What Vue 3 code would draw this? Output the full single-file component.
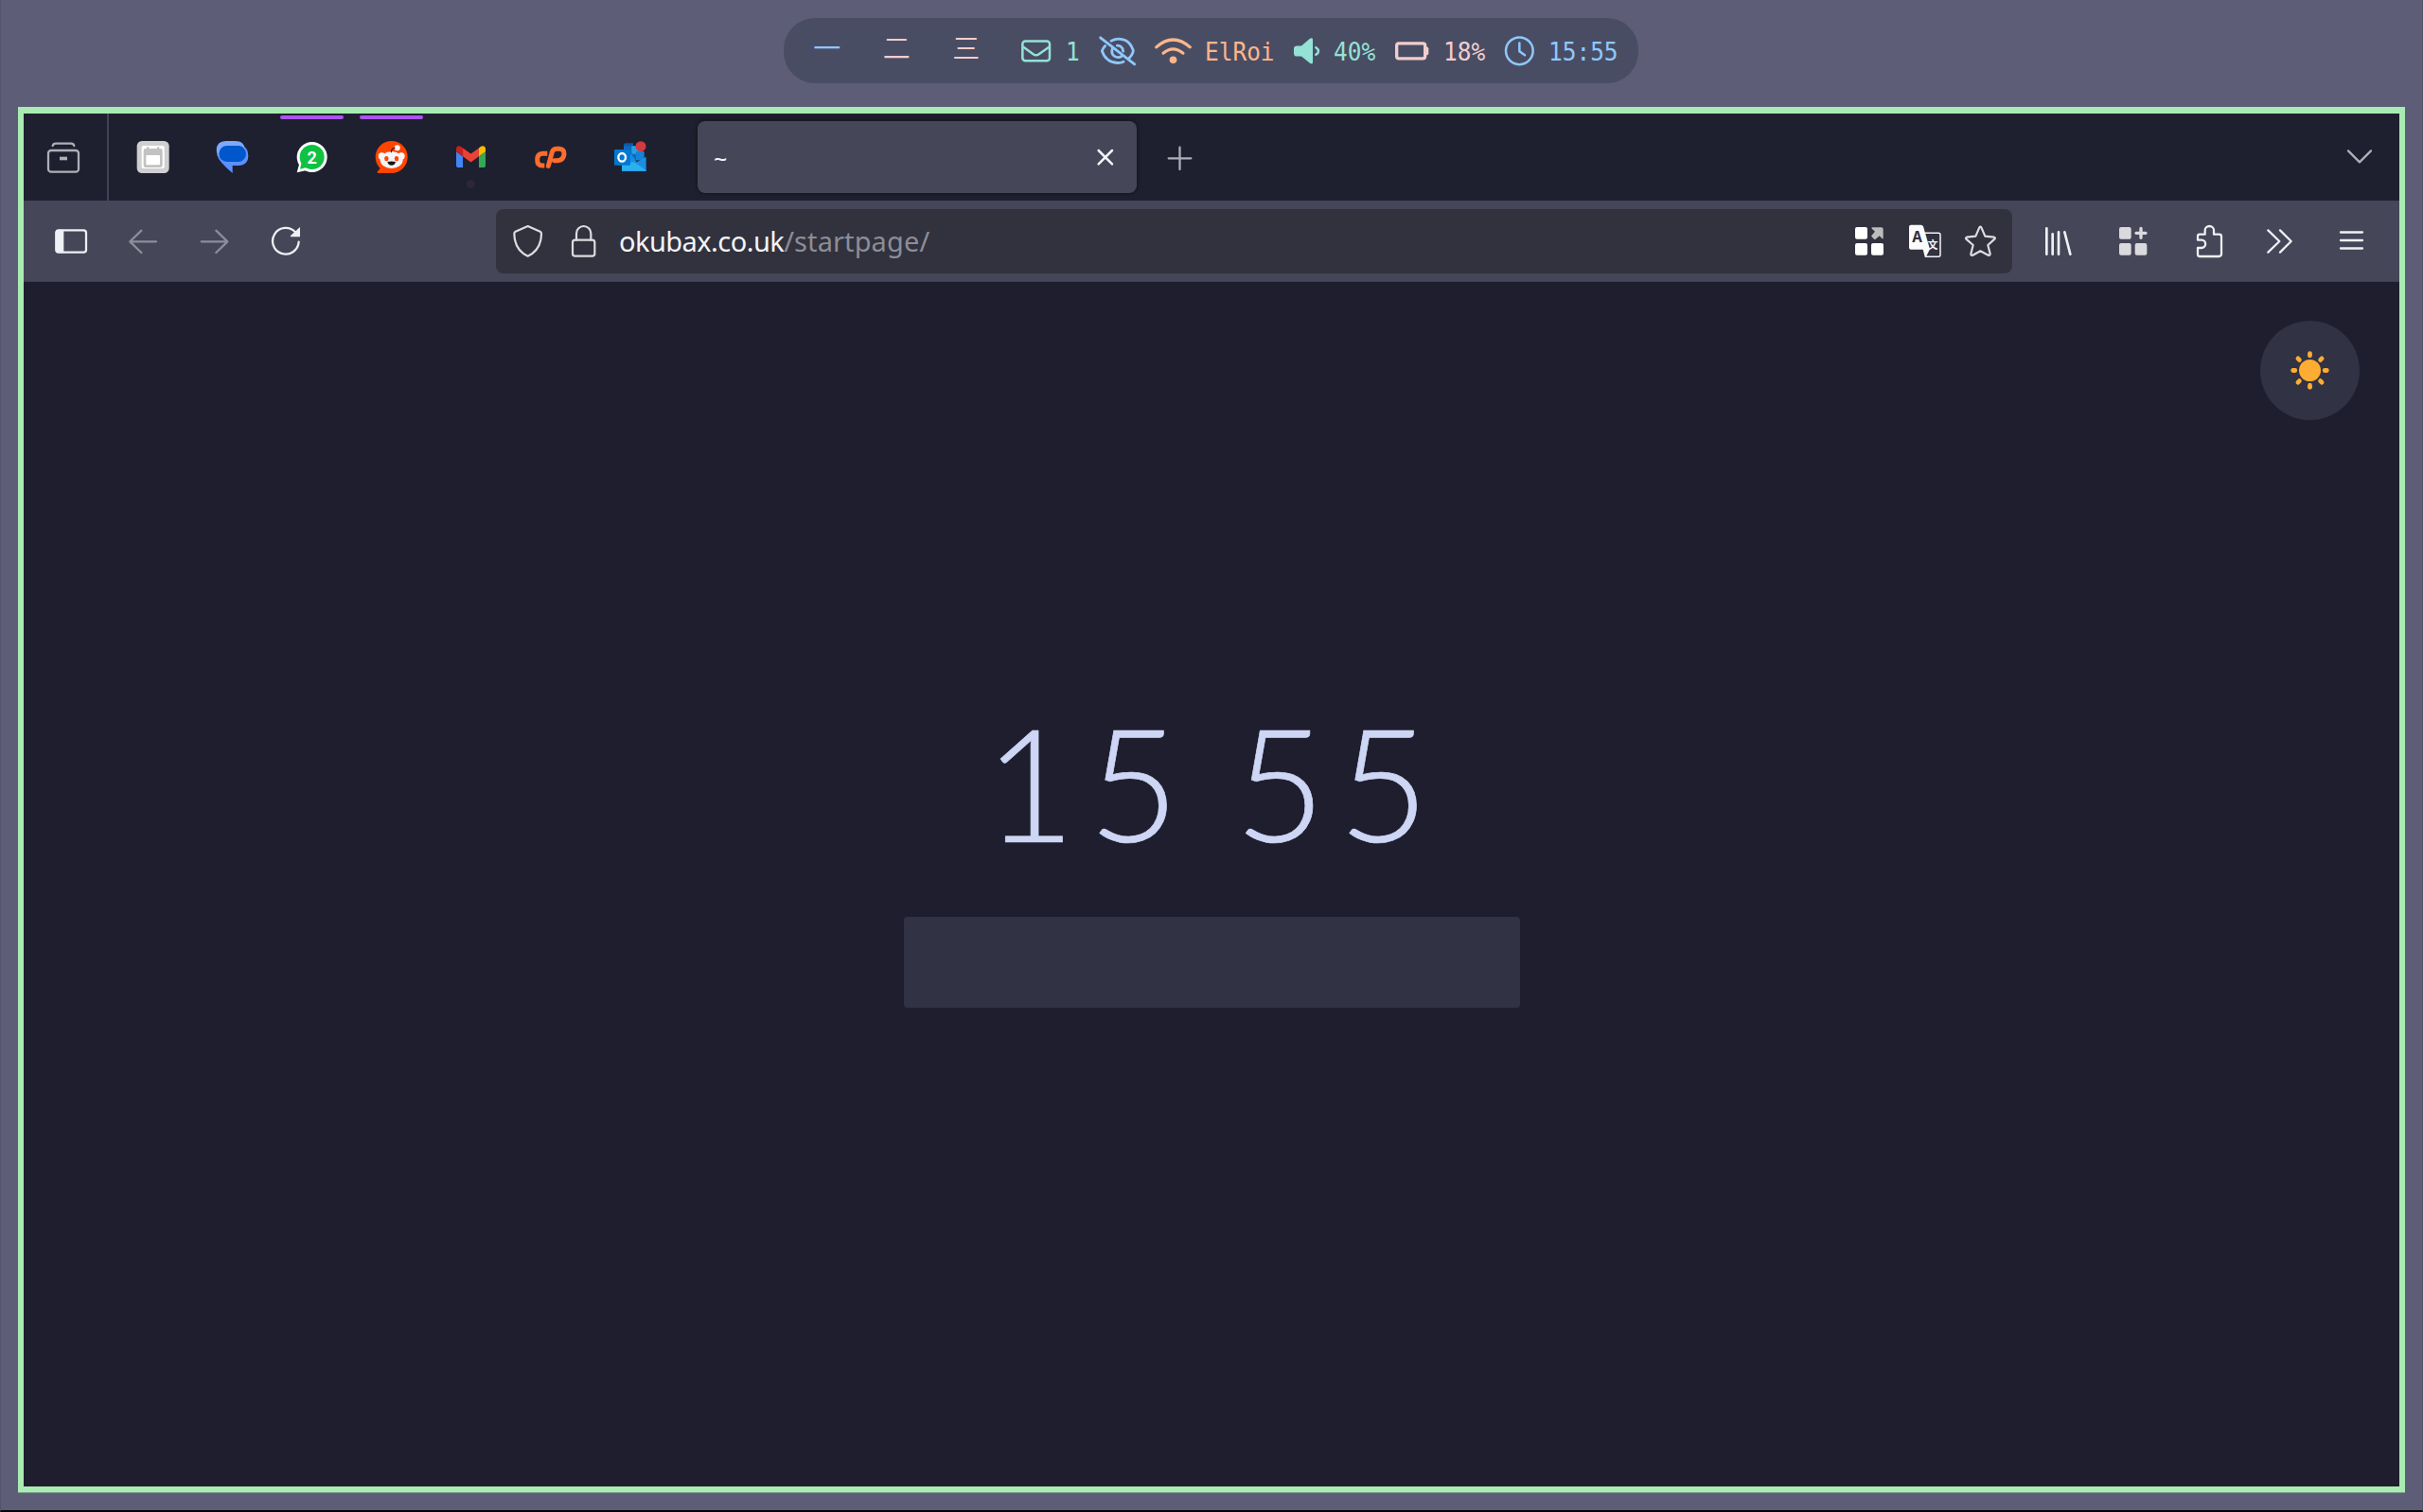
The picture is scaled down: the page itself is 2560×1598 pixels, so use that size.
<script setup>
import { ref } from 'vue'

const time = ref('15:55')
const clock = ref('15 55')
const workspaces = ['一', '二', '三']
</script>

<template>
  <div class="desktop">
    <header class="status">
      <span v-for="(w, i) in workspaces" :key="w" class="ws" :class="{ active: i === 0 }">{{ w }}</span>

      <svg class="si mail teal" viewBox="759 64.5 132 132">
        <rect x="781" y="99" width="86" height="62" rx="9" stroke-width="7.5" />
        <path d="M784 118 L815 140 Q824 147 833 140 L865 118" stroke-width="7.5" />
      </svg>
      <span class="st c1 teal"><b>1</b></span>

      <svg class="si eye blue" viewBox="1017 64.5 132 132" stroke-width="8.5">
        <path d="M1062 98 Q1085 86 1108 97 Q1123 105 1131 126 Q1133 130 1131 134 Q1127 145 1119 153" />
        <path d="M1043 114 Q1036 121 1033 130 Q1045 166 1082 168 Q1093 168 1101 164" />
        <path d="M1067 119 Q1060 137 1071 146 Q1084 154 1095 147" />
        <path d="M1081 113 A18 18 0 0 1 1100 131" />
        <path d="M1028 88 L1136 172" />
      </svg>

      <svg class="si wifi peach" viewBox="1194 64.5 132 132" stroke-width="9.5">
        <path d="M1205 118 Q1258 71 1312 118" />
        <path d="M1227 137 Q1258 111 1290 137" />
        <circle cx="1258.500" cy="158.500" r="11.500" class="solid" />
      </svg>
      <span class="st c5 net peach"><b>ElRoi</b></span>

      <svg class="si vol teal" viewBox="297 64.5 132 132">
        <path class="solid" d="M321 124 q0 -10 10 -10 H345 L372 91 q7 -4 9 2 V167 q-2 6 -9 2 L345 147 H331 q-10 0 -10 -10Z" />
        <path d="M391 119 Q407 130 391 142" stroke-width="7.5" />
      </svg>
      <span class="st c3 volt teal"><b>40%</b></span>

      <svg class="si bat rose" viewBox="630 64.5 132 132">
        <rect x="647" y="106" width="90" height="48" rx="7" stroke-width="10" />
        <path class="solid" d="M741 116 q7 1 7 6 v16 q0 5 -7 6z" />
      </svg>
      <span class="st c3 batt rose"><b>18%</b></span>

      <svg class="si clk blue" viewBox="969 64.5 132 132" stroke-width="7.5">
        <circle cx="1036" cy="130" r="43" />
        <path d="M1036 105 V131 L1053 143" />
      </svg>
      <span class="st c5 clkt blue"><b>{{ time }}</b></span>
    </header>

    <main class="window">
      <nav class="tabs">
        <svg class="ic view dim" viewBox="141 138 120 120">
          <path d="M167 162 q2 -7 10 -7 h48 q8 0 10 7" />
          <rect x="153" y="177" width="96" height="68" rx="9" />
          <rect x="189" y="197" width="24" height="11" class="fill" />
        </svg>
        <i class="sep"></i>

        <div class="pin first">
          <svg class="ic" viewBox="426 138 120 120" stroke="none">
            <rect x="434" y="147" width="102" height="102" rx="16" fill="#cfcfd0" />
            <rect x="449" y="162" width="72" height="72" rx="5" fill="#fff" />
            <path d="M465 166h7v5h26v-5h7v5h3q7 0 7 7v46q0 7-7 7h-46q-7 0-7-7v-46q0-7 7-7h3z" fill="#c2c2c2" />
            <rect x="463" y="192" width="44" height="31" rx="3" fill="#fff" />
          </svg>
        </div>
        <div class="pin">
          <svg class="ic" viewBox="678 138 120 120" stroke="none">
            <path fill="#5a90ff" d="M688 192 Q694 213 737 249 V225 H757 Q787 222 787 194 Q787 162 757 160 H705 Q690 165 688 192Z" />
            <path fill="#7ea9ff" d="M716 147 H744 Q768 147 774 163 L780 190 L694 196 Q686 188 686 177 Q686 147 716 147Z" />
            <rect x="694" y="162" width="86" height="51" rx="25.500" fill="#0057cc" />
          </svg>
        </div>
        <div class="pin loud">
          <svg class="ic" viewBox="930 138 120 120" stroke="none">
            <circle cx="989" cy="198" r="48" fill="#fff" />
            <path d="M949 218 L941 247 L972 240Z" fill="#fff" />
            <circle cx="989" cy="198" r="39" fill="#10c143" />
            <path d="M956 215 L951 236 L974 230Z" fill="#10c143" />
            <text x="989" y="218" text-anchor="middle" class="badge">2</text>
          </svg>
        </div>
        <div class="pin loud">
          <svg class="ic" viewBox="42 138 120 120" stroke="none">
            <circle cx="101" cy="198" r="51" fill="#ff4500" />
            <path d="M101 249 H58 Q53 248 57 243 L68 231Z" fill="#ff4500" />
            <circle cx="70" cy="195" r="11" fill="#fff" />
            <circle cx="132" cy="195" r="11" fill="#fff" />
            <ellipse cx="101" cy="207" rx="36" ry="27" fill="#f1f5f8" />
            <circle cx="119" cy="169" r="9" fill="#fff" />
            <path d="M100 182 Q101 170 111 169" stroke="#3a1a14" stroke-width="4" />
            <ellipse cx="85" cy="203" rx="6.500" ry="8" fill="#ff4500" />
            <ellipse cx="117" cy="203" rx="6.500" ry="8" fill="#ff4500" />
            <path d="M88 213 Q101 210 114 213 Q112 224 101 224 Q90 224 88 213Z" fill="#1c1414" />
          </svg>
        </div>
        <div class="pin">
          <svg class="ic" viewBox="294 138 120 120" stroke="none">
            <g transform="translate(306 163) scale(1.057 1.03) translate(-52 -42)">
              <path fill="#4285f4" d="M58 108h14V74L52 59v43c0 3.320 2.690 6 6 6" />
              <path fill="#34a853" d="M120 108h14c3.320 0 6-2.690 6-6V59l-20 15" />
              <path fill="#fbbc04" d="M120 48v26l20-15v-8c0-7.420-8.470-11.650-14.400-7.200" />
              <path fill="#ea4335" d="M72 74V48l24 18 24-18v26L96 92" />
              <path fill="#c5221f" d="M52 51v8l20 15V48l-5.600-4.200c-5.940-4.450-14.400-.22-14.400 7.200" />
            </g>
          </svg>
          <i class="dot"></i>
        </div>
        <div class="pin">
          <svg class="ic" viewBox="546 138 120 120" stroke="#ff6c2c" stroke-width="15">
            <path d="M595 187 H580 Q563 188 563 206 Q563 225 579 225 H586" style="stroke-linecap: butt" />
            <path d="M598 226 L610 182 Q614 172 624 172 H633 Q648 173 648 188 Q646 208 627 209 H617" />
          </svg>
        </div>
        <div class="pin">
          <svg class="ic" viewBox="798 138 120 120" stroke="none">
            <path d="M837 160 q0-6 6-6 h24 v26 h-30z" fill="#0a5ba8" />
            <rect x="837" y="163" width="48" height="45" fill="#0b6cc0" />
            <rect x="862" y="163" width="26" height="25" fill="#28a0e8" />
            <rect x="876" y="180" width="26" height="28" fill="#1583d8" />
            <path d="M860 188 L878 214 L908 197 V242 H831 V212Z" fill="#1a8fe0" />
            <path d="M831 220 L870 214 L908 240 V242 H831Z" fill="#2bb0f0" />
            <rect x="807" y="174" width="51" height="50" rx="3" fill="#0078d4" />
            <ellipse cx="831.500" cy="199" rx="11.500" ry="13" stroke="#fff" stroke-width="7" />
            <circle cx="891" cy="164" r="16.500" fill="#d13a3f" />
          </svg>
        </div>

        <div class="tab">
          <span class="title">~</span>
          <svg class="ic close" viewBox="1101 138 120 120" stroke="#f4f5f8" stroke-width="7.5">
            <path d="M1142 177 L1185 220 M1185 177 L1142 220" />
          </svg>
        </div>
        <svg class="ic plus dim" viewBox="1338 138 120 120">
          <path d="M1399.500 167V237 M1364 202H1435" />
        </svg>
        <svg class="ic chev dim" viewBox="759 138 120 120">
          <path d="M783 178 L819 214 L855 178" />
        </svg>
      </nav>

      <div class="toolbar">
        <svg class="ic t1" viewBox="165 405 120 120">
          <rect x="178" y="430" width="95" height="70" rx="8" />
          <path class="fill" d="M176 436 q2-8 9-8 h17 v74 h-17 q-8 0-9-8z" />
        </svg>
        <svg class="ic t2 off" viewBox="393 405 120 120">
          <path d="M495 466 H412 M448 431 L412 466 L448 501" />
        </svg>
        <svg class="ic t3 off" viewBox="621 405 120 120">
          <path d="M638 466 H721 M685 431 L721 466 L685 501" />
        </svg>
        <svg class="ic t4" viewBox="846 405 120 120">
          <path d="M947 467 A41.500 41.500 0 1 1 936 436" />
          <path class="fill" d="M951 420 V451 H922 q-3-1-1-4z" />
        </svg>

        <div class="urlbar">
          <svg class="ic u1 soft" viewBox="114 105 120 120">
            <path d="M173 117 L212 134 Q216 136 216 141 Q215 193 173 212 Q131 193 130 141 Q130 136 134 134Z" />
          </svg>
          <svg class="ic u2 soft" viewBox="291 105 120 120">
            <rect x="315" y="161" width="70" height="51" rx="8" />
            <path d="M327 161 V140 a23 23 0 0 1 46 0 V161" />
          </svg>
          <span class="url">okubax.co.uk<em>/startpage/</em></span>
          <svg class="ic u3" viewBox="105 105 120 120">
            <rect x="120" y="120" width="39" height="38" rx="6" />
            <rect x="120" y="171" width="39" height="38" rx="6" />
            <rect x="171" y="171" width="39" height="38" rx="6" />
            <path d="M173 121 H203 q6 0 6 6 V157 H206 L197 148 L184 159 H181 L172 150 V147 L183 134 L173 125Z" fill="#bcbcbe" />
          </svg>
          <svg class="ic u4" viewBox="282 105 120 120">
            <path d="M341 139 H384 q6 0 6 6 V208 q0 6 -6 6 H343" stroke="#f3f3f8" stroke-width="4.500" />
            <path d="M297 113 H329 q5 0 7 5 L357 190 L345 214 H341 L335 191 H297 q-6 0 -6 -6 V119 q0 -6 6 -6" fill="#fbfbfe" stroke="none" />
            <text x="317" y="169" text-anchor="middle" class="ta">A</text>
            <text x="366" y="189" text-anchor="middle" class="tb">文</text>
          </svg>
          <svg class="ic u5 soft" viewBox="459 105 120 120">
            <path d="M514 121 Q517 117 520 121 L532 149 L560 152 Q566 154 562 158 L541 177 L548 205 Q548 211 542 209 L517 196 L493 209 Q486 211 487 205 L494 177 L472 158 Q469 154 474 152 L502 149Z" />
          </svg>
        </div>

        <svg class="ic r1" viewBox="705 105 120 120" stroke-width="8">
          <path d="M727 124V206 M746 142V206 M765 136V206 M784 136L802 206" />
        </svg>
        <svg class="ic r2" viewBox="42 405 120 120">
          <rect x="57" y="420" width="38" height="38" rx="6" />
          <rect x="57" y="471" width="38" height="38" rx="6" />
          <rect x="107" y="471" width="38" height="38" rx="6" />
          <path d="M126 424V454 M111 439H141" stroke="#dadade" stroke-width="10" />
        </svg>
        <svg class="ic r3" viewBox="282 405 120 120">
          <path d="M312 443 H329 V430 a14 13 0 0 1 28 0 V443 H374 q7 0 7 7 V505 q0 8 -8 8 H313 q-7 0 -7 -7 V486 H318 a12 12 0 0 0 0 -25 H306 V449 q0 -6 6 -6z" />
        </svg>
        <svg class="ic r4" viewBox="504 405 120 120">
          <path d="M529 430 L565 465 L529 500 M567 430 L602 465 L567 500" />
        </svg>
        <svg class="ic r5" viewBox="735 405 120 120">
          <path d="M759 436.500H828 M759 462H828 M759 487.500H828" />
        </svg>
      </div>

      <section class="page">
        <button class="theme" aria-label="Toggle theme">
          <svg viewBox="-52.5 -52.5 105 105" width="105" height="105">
            <circle r="11.500" fill="#ffac33" />
            <path
              v-for="n in 8"
              :key="n"
              d="M0 -17.800V-15.700"
              :transform="`rotate(${n * 45})`"
              stroke="#ffac33"
              stroke-width="4.800"
              stroke-linecap="round"
            />
          </svg>
        </button>
        <div class="clock">{{ clock }}</div>
        <input class="search" type="text" aria-label="Search" />
      </section>
    </main>
  </div>
</template>

<style>
html,
body {
  margin: 0;
  background: #5e5d78;
}
</style>

<style scoped>
.desktop {
  box-sizing: border-box;
  width: 2560px;
  height: 1598px;
  padding-top: 19px;
  overflow: hidden;
  background: #5e5d78;
  border-left: 1px solid #54536b;
  border-right: 1px solid #54536b;
  border-bottom: 2px solid #06060a;
  display: flex;
  flex-direction: column;
  font-family: 'Noto Sans', sans-serif;
}

/* status pill */
.status {
  box-sizing: border-box;
  width: 903px;
  height: 69px;
  margin-left: 827px;
  padding-left: 9px;
  border-radius: 33px;
  background: #494d64;
  display: flex;
  align-items: center;
}
.ws {
  width: 73.500px;
  height: 40px;
  margin-bottom: 9px;
  text-align: center;
  font: 350 29px/40px 'Noto Sans CJK JP', sans-serif;
  color: #f2cdcd;
}
.ws.active { color: #8fc8fb; }
.si {
  width: 44px;
  height: 44px;
  flex: none;
  fill: none;
  stroke: currentColor;
  stroke-linecap: round;
  stroke-linejoin: round;
}
.si .solid { fill: currentColor; stroke: none; }
.st {
  flex: none;
  height: 32px;
  margin-top: 2px;
  font: 26.500px/32px 'DejaVu Sans Mono', monospace;
}
.st b {
  display: inline-block;
  font-weight: 400;
  transform: scaleX(0.922);
  transform-origin: 0 0;
}
.c1 { width: 15px; margin-left: 9px; }
.c3 { width: 44px; }
.c5 { width: 73px; }
.mail { margin-left: 15.500px; }
.eye { margin-left: 18px; }
.wifi { margin-left: 15px; }
.net { margin-left: 11px; }
.vol { margin-left: 13px; }
.volt { margin-left: 6px; }
.bat { margin-left: 17px; }
.batt { margin-left: 11px; }
.clk { margin-left: 14px; }
.clkt { margin-left: 9px; }
.teal { color: #94e2d5; }
.blue { color: #8fc8fb; }
.peach { color: #fcb68c; }
.rose { color: #f2cdcd; }

/* browser window */
.window {
  box-sizing: border-box;
  width: 2522px;
  height: 1464px;
  margin: 25px 0 0 18px;
  border: 6px solid #a9ebb2;
  border-top-width: 7px;
  box-shadow: 0 1px 0 #7a9a90;
  display: flex;
  flex-direction: column;
  background: #1e1e2e;
}
.ic {
  width: 40px;
  height: 40px;
  flex: none;
  fill: none;
  stroke-linecap: round;
  stroke-linejoin: round;
}
.ic text { stroke: none; }
.fill { fill: currentColor; stroke: none; }

.tabs {
  height: 92px;
  display: flex;
  align-items: center;
  background: #1e202f;
}
.dim { color: #aeafb7; stroke: currentColor; stroke-width: 6.800px; }
.view { margin-left: 22px; }
.sep { width: 2px; height: 92px; margin-left: 26px; background: #414356; }
.pin {
  position: relative;
  width: 84px;
  height: 92px;
  display: flex;
  align-items: center;
  justify-content: center;
}
.pin.first { margin-left: 5px; }
.loud::before {
  content: '';
  position: absolute;
  top: 2px;
  left: 8px;
  width: 67px;
  height: 4px;
  border-radius: 2px;
  background: #ac54f0;
}
.dot {
  position: absolute;
  top: 70px;
  left: 37px;
  width: 9px;
  height: 9px;
  border-radius: 50%;
  background: #2c2639;
}
.badge { font: 700 54px 'Roboto', sans-serif; fill: #fff; }
.tab {
  box-sizing: border-box;
  width: 464px;
  height: 76px;
  margin-left: 29px;
  padding: 0 14px 0 17px;
  border-radius: 8px;
  background: #454658;
  box-shadow: 0 0 4px rgba(0, 0, 0, 0.55);
  display: flex;
  align-items: center;
  justify-content: space-between;
}
.title { padding-top: 2px; font-size: 25px; line-height: 32px; color: #f4f5f8; }
.plus { margin-left: 25px; }
.chev { margin: 0 22px 0 auto; }

.toolbar {
  box-sizing: border-box;
  height: 86px;
  display: flex;
  align-items: center;
  background: #454658;
  border-bottom: 1px solid #3e3f50;
  color: #eff0f4;
}
.toolbar > .ic:not(.r2) { stroke: currentColor; }
.toolbar > .ic:not(.r1):not(.r2) { stroke-width: 6.800px; }
.toolbar > .off { color: #8d8e99; }
.t1 { margin-left: 30px; }
.t2, .t3 { margin-left: 36px; }
.t4 { margin-left: 35px; }
.urlbar {
  box-sizing: border-box;
  width: 1602px;
  height: 68px;
  margin-left: 202px;
  padding: 0 13px 0 14px;
  border-radius: 8px;
  background: #31323e;
  display: flex;
  align-items: center;
}
.soft { stroke: #dcdde1; stroke-width: 6.600px; }
.u2, .u4, .u5 { margin-left: 19px; }
.u3 { margin-left: auto; fill: #fff; }
.url {
  margin-left: 17px;
  font-size: 29px;
  line-height: 40px;
  letter-spacing: -0.550px;
  color: #f3f4f7;
}
.url em { font-style: normal; letter-spacing: 0.100px; color: #8c8d96; }
.ta { font: 700 46px 'Noto Sans', sans-serif; fill: #31323e; }
.tb { font: 700 33px 'Noto Sans CJK SC', sans-serif; fill: #f3f3f8; }
.r1 { margin-left: 29px; }
.r2 { margin-left: 39px; fill: #dadade; }
.r3 { margin-left: 40px; }
.r4 { margin-left: 34px; }
.r5 { margin-left: 37px; }

/* start page */
.page {
  flex: 1;
  display: flex;
  flex-direction: column;
  align-items: center;
}
.theme {
  align-self: flex-end;
  width: 105px;
  height: 105px;
  margin: 41px 42px 0 0;
  padding: 0;
  border: 0;
  border-radius: 50%;
  background: #313244;
}
.theme svg { display: block; }
.clock {
  height: 200px;
  margin: 282px 0 0 4px;
  font: 300 165px/200px 'Lato', sans-serif;
  letter-spacing: 14px;
  word-spacing: -14px;
  white-space: pre;
  color: #cdd6f4;
  -webkit-text-stroke: 0.700px #cdd6f4;
}
.search {
  box-sizing: border-box;
  width: 651px;
  height: 96px;
  margin-top: 43px;
  border: 0;
  border-radius: 4px;
  background: #313244;
  outline: none;
}
</style>
